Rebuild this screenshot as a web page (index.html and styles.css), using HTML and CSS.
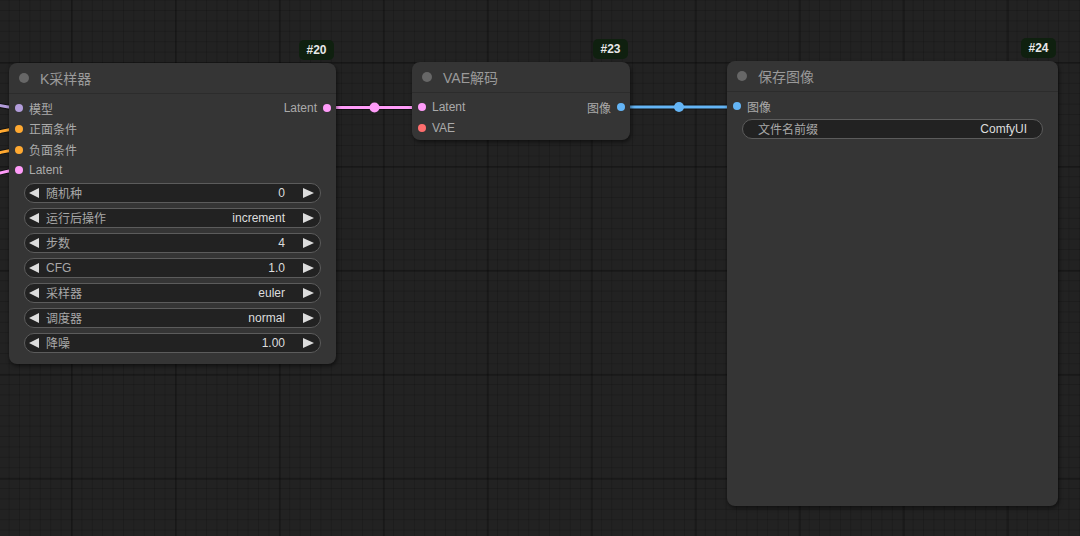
FILE: index.html
```html
<!DOCTYPE html>
<html lang="zh">
<head>
<meta charset="utf-8">
<title>ComfyUI</title>
<link rel="stylesheet" href="styles.css">
</head>
<body>
<div class="canvas">
  <svg class="wires" width="1080" height="536" viewBox="0 0 1080 536">
    <g fill="none" stroke-linecap="round">
      <path class="wb" d="M -30 100 C -10 101, 0 108, 19 108"/>
      <path d="M -30 100 C -10 101, 0 108, 19 108" stroke="#b39ddb" stroke-width="3"/>
      <path class="wb" d="M -30 142 C -10 136, 0 129, 19 129"/>
      <path d="M -30 142 C -10 136, 0 129, 19 129" stroke="#ffa931" stroke-width="3"/>
      <path class="wb" d="M -30 163 C -10 157, 0 150, 19 150"/>
      <path d="M -30 163 C -10 157, 0 150, 19 150" stroke="#ffa931" stroke-width="3"/>
      <path class="wb" d="M -30 182 C -10 178, 0 170, 19 170"/>
      <path d="M -30 182 C -10 178, 0 170, 19 170" stroke="#ff9cf9" stroke-width="3"/>
      <path class="wb" d="M 327 107.5 L 422 107.5"/>
      <path d="M 327 107.5 L 422 107.5" stroke="#ff9cf9" stroke-width="3"/>
      <path class="wb" d="M 621 107 L 737 107"/>
      <path d="M 621 107 L 737 107" stroke="#64b5f6" stroke-width="3"/>
    </g>
    <circle cx="374.5" cy="107.5" r="5" fill="#ff9cf9"/>
    <circle cx="679" cy="107" r="5" fill="#64b5f6"/>
  </svg>

  <div class="node ksampler">
    <div class="badge">#20</div>
    <div class="title"><span class="tdot"></span><span class="ttext">K采样器</span></div>
    <div class="nbody">
      <div class="slots">
        <div class="row"><div class="in"><i class="dot model"></i>模型</div><div class="out">Latent<i class="dot latent"></i></div></div>
        <div class="row"><div class="in"><i class="dot cond"></i>正面条件</div></div>
        <div class="row"><div class="in"><i class="dot cond"></i>负面条件</div></div>
        <div class="row"><div class="in"><i class="dot latent"></i>Latent</div></div>
      </div>
      <div class="widgets">
        <div class="widget"><span class="arr al"></span><span class="wl">随机种</span><span class="wv">0</span><span class="arr ar"></span></div>
        <div class="widget"><span class="arr al"></span><span class="wl">运行后操作</span><span class="wv">increment</span><span class="arr ar"></span></div>
        <div class="widget"><span class="arr al"></span><span class="wl">步数</span><span class="wv">4</span><span class="arr ar"></span></div>
        <div class="widget"><span class="arr al"></span><span class="wl">CFG</span><span class="wv">1.0</span><span class="arr ar"></span></div>
        <div class="widget"><span class="arr al"></span><span class="wl">采样器</span><span class="wv">euler</span><span class="arr ar"></span></div>
        <div class="widget"><span class="arr al"></span><span class="wl">调度器</span><span class="wv">normal</span><span class="arr ar"></span></div>
        <div class="widget"><span class="arr al"></span><span class="wl">降噪</span><span class="wv">1.00</span><span class="arr ar"></span></div>
      </div>
    </div>
  </div>

  <div class="node vaedecode">
    <div class="badge">#23</div>
    <div class="title"><span class="tdot"></span><span class="ttext">VAE解码</span></div>
    <div class="nbody">
      <div class="slots">
        <div class="row"><div class="in"><i class="dot latent"></i>Latent</div><div class="out">图像<i class="dot image"></i></div></div>
        <div class="row"><div class="in"><i class="dot vae"></i>VAE</div></div>
      </div>
    </div>
  </div>

  <div class="node saveimage">
    <div class="badge">#24</div>
    <div class="title"><span class="tdot"></span><span class="ttext">保存图像</span></div>
    <div class="nbody">
      <div class="slots">
        <div class="row"><div class="in"><i class="dot image"></i>图像</div></div>
      </div>
      <div class="widgets">
        <div class="widget text"><span class="wl">文件名前缀</span><span class="wv">ComfyUI</span></div>
      </div>
    </div>
  </div>
</div>
</body>
</html>
```

FILE: styles.css
```css
* { box-sizing: border-box; }
html, body {
  margin: 0;
  padding: 0;
  background: #222;
}
.canvas {
  position: relative;
  width: 1080px;
  height: 536px;
  overflow: hidden;
  font-family: "Liberation Sans", Arial, "Noto Sans CJK SC", sans-serif;
  font-size: 12px;
  background-color: #222222;
  background-image:
    linear-gradient(to right, rgba(0,0,0,0.2) 2px, transparent 2px),
    linear-gradient(to bottom, rgba(0,0,0,0.2) 2px, transparent 2px),
    linear-gradient(to right, rgba(0,0,0,0.15) 1px, transparent 1px),
    linear-gradient(to bottom, rgba(0,0,0,0.15) 1px, transparent 1px);
  background-size: 104px 104px, 104px 104px, 10.4px 10.4px, 10.4px 10.4px;
  background-position: 71px 62px, 71px 62px, 71px 62px, 71px 62px;
}
.wires {
  position: absolute;
  left: 0;
  top: 0;
  z-index: 0;
}
.wb {
  stroke: rgba(0,0,0,0.45);
  stroke-width: 5;
}
.node {
  position: absolute;
  z-index: 1;
  background: #353535;
  border-radius: 8px;
  box-shadow: 1px 2px 4px rgba(0,0,0,0.55);
  display: flex;
  flex-direction: column;
}
.ksampler { left: 9px; top: 63px; width: 327px; height: 301px; }
.vaedecode { left: 412px; top: 62px; width: 218px; height: 78px; }
.saveimage { left: 727px; top: 61px; width: 331px; height: 445px; }

.badge {
  position: absolute;
  right: 2px;
  bottom: calc(100% + 3px);
  height: 20px;
  min-width: 35px;
  padding: 0 7px;
  text-align: center;
  background: #0f200f;
  color: #e8e8e8;
  font-weight: bold;
  font-size: 12px;
  line-height: 20px;
  border-radius: 5px;
}
.title {
  height: 31px;
  display: flex;
  align-items: center;
  border-bottom: 1px solid #2c2c2c;
  color: #9a9a9a;
  font-size: 14px;
}
.tdot {
  width: 10px;
  height: 10px;
  border-radius: 50%;
  background: #676767;
  margin-left: 10px;
  margin-right: 11px;
}
.nbody {
  display: flex;
  flex-direction: column;
  padding-top: 4px;
}
.slots {
  display: flex;
  flex-direction: column;
}
.row {
  height: 20.67px;
  display: flex;
  align-items: center;
  justify-content: space-between;
  color: #aaaaaa;
}
.in, .out {
  display: flex;
  align-items: center;
}
.in .dot { margin-left: 6px; margin-right: 6px; }
.out { margin-left: auto; }
.out .dot { margin-left: 5.5px; margin-right: 5.5px; }
.dot {
  display: block;
  width: 8px;
  height: 8px;
  border-radius: 50%;
}
.model { background: #b39ddb; }
.cond { background: #ffa931; }
.latent { background: #ff9cf9; }
.vae { background: #ff6e6e; }
.image { background: #64b5f6; }

.widgets {
  display: flex;
  flex-direction: column;
  gap: 5px;
  padding: 2px 15px 0 15px;
}
.widget {
  height: 20px;
  border: 1px solid #5c5c5c;
  border-radius: 10px;
  background: #222222;
  display: flex;
  align-items: center;
  padding: 0 6px 0 4px;
}
.wl {
  color: #a8a8a8;
  margin-left: 7px;
  flex: 1;
}
.wv {
  color: #dddddd;
  margin-right: 18px;
}
.widget.text { padding: 0 15px; }
.widget.text .wl { margin-left: 0; }
.widget.text .wv { margin-right: 0; }
.arr {
  display: block;
  width: 0;
  height: 0;
  border-top: 5.5px solid transparent;
  border-bottom: 5.5px solid transparent;
}
.al { border-right: 10px solid #dcdcdc; }
.ar { border-left: 11px solid #dcdcdc; }
```
